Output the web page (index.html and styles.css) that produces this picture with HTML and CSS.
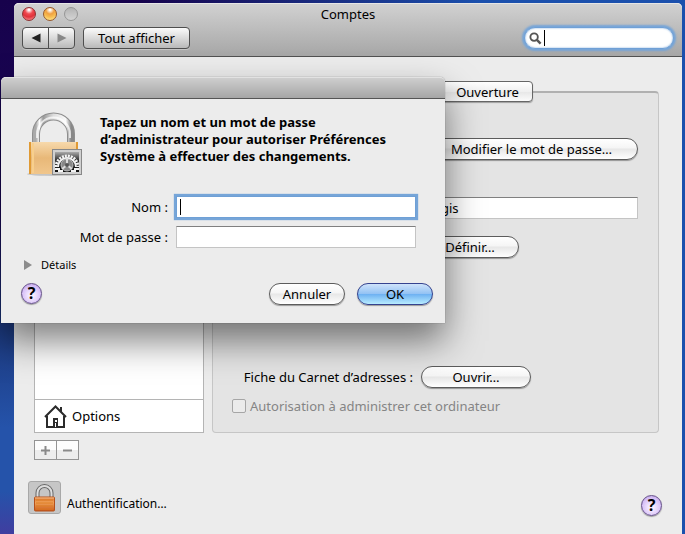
FILE: index.html
```
<!DOCTYPE html>
<html lang="fr">

<head>
    <meta charset="utf-8">
    <title>Comptes</title>
    <link rel="stylesheet" href="styles.css">
</head>

<body>
    <main class="window">
        <header class="titlebar">
            <div class="title-row">
                <div class="lights">
                    <button class="light red" aria-label="Fermer"></button>
                    <button class="light yellow" aria-label="Réduire"></button>
                    <button class="light gray" aria-label="Agrandir" disabled></button>
                </div>
                <h1>Comptes</h1>
            </div>
            <div class="toolbar">
                <div class="nav">
                    <button class="tool-button" aria-label="Précédent">
                        <svg width="10" height="10" viewBox="0 0 10 10"><path d="M9.500 0.500v9L0.500 5z" fill="#222" /></svg>
                    </button>
                    <button class="tool-button" aria-label="Suivant">
                        <svg width="10" height="10" viewBox="0 0 10 10"><path d="M0.500 0.500v9L9.500 5z" fill="#888" /></svg>
                    </button>
                </div>
                <button class="tool-button show-all">Tout afficher</button>
                <label class="search">
                    <svg width="13" height="13" viewBox="0 0 14 14" fill="none" stroke="#555">
                        <circle cx="5.500" cy="5.500" r="4" stroke-width="2" />
                        <path d="M8.500 8.500l4 4" stroke-width="2.600" />
                    </svg>
                    <input type="text" class="search-input" aria-label="Rechercher">
                </label>
            </div>
        </header>

        <div class="content">
            <aside class="sidebar">
                <div class="accounts">
                    <div class="account-list"></div>
                    <div class="options">
                        <svg width="23" height="23" viewBox="0 0 23 23" fill="none" stroke="#2b2b2b" stroke-width="2">
                            <path d="M1 12L11.500 1.500L22 12" />
                            <path d="M3 11v11h17V11M17 7V2" />
                            <path d="M9 13h5v9H9z" fill="#2b2b2b" stroke="none" />
                            <path d="M11 15h2v2h-2zM11 18h1v4h-1z" fill="#fff" stroke="none" />
                        </svg>
                        Options
                    </div>
                </div>
                <div class="list-buttons">
                    <button aria-label="Ajouter" disabled>
                        <svg width="9" height="9" viewBox="0 0 9 9" stroke="#8a8a8a" stroke-width="2"><path d="M4.500 0v9M0 4.500h9" /></svg>
                    </button>
                    <button aria-label="Supprimer" disabled>
                        <svg width="9" height="9" viewBox="0 0 9 9" stroke="#8a8a8a" stroke-width="2"><path d="M0 4.500h9" /></svg>
                    </button>
                </div>
            </aside>

            <section class="pane-area">
                <div class="tabs">
                    <button class="tab">Ouverture</button>
                </div>
                <div class="pane">
                    <button class="pill change-password">Modifier le mot de passe…</button>
                    <input type="text" class="field full-name" value="gis" aria-label="Nom complet">
                    <button class="pill define">Définir…</button>
                    <label class="card-label" for="openCard">Fiche du Carnet d’adresses :</label>
                    <button class="pill open-card" id="openCard">Ouvrir…</button>
                    <label class="admin"><input type="checkbox" disabled>Autorisation à administrer cet ordinateur</label>
                </div>
            </section>
        </div>

        <footer class="footer">
            <button class="lock-button" aria-label="Authentification">
                <svg width="23" height="28" viewBox="0 0 23 28">
                    <defs>
                        <linearGradient id="orange" x1="0" y1="0" x2="0" y2="1">
                            <stop offset="0" stop-color="#d8702c" />
                            <stop offset=".4" stop-color="#f0a258" />
                            <stop offset="1" stop-color="#c9591c" />
                        </linearGradient>
                    </defs>
                    <path d="M4.500 14V9a7 7 0 0 1 14 0v5" fill="none" stroke="#666" stroke-width="4" />
                    <path d="M4.500 14V9a7 7 0 0 1 14 0v5" fill="none" stroke="#ddd" stroke-width="2" />
                    <rect x="1.500" y="13" width="20" height="14" rx="1" fill="url(#orange)" stroke="#b5501a" />
                    <path d="M3 16h17M3 19h17M3 22h17M3 25h17" stroke="#dc7a22" />
                    <path d="M2 14h19" stroke="#f8c08a" />
                </svg>
            </button>
            <span class="auth-text">Authentification…</span>
            <button class="help">?</button>
        </footer>
    </main>

    <form class="dialog" role="dialog" aria-label="Authentification">
        <div class="dialog-bar"></div>
        <div class="dialog-body">
            <div class="message">
                <svg width="58" height="66" viewBox="0 0 58 66">
                    <defs>
                        <linearGradient id="brass" x1="0" y1="0" x2="0" y2="1">
                            <stop offset="0" stop-color="#f7d9ac" />
                            <stop offset=".5" stop-color="#e8b878" />
                            <stop offset="1" stop-color="#f0c68c" />
                        </linearGradient>
                        <linearGradient id="steel" x1="0" y1="0" x2="1" y2="0">
                            <stop offset="0" stop-color="#aaa" />
                            <stop offset=".1" stop-color="#fff" />
                            <stop offset=".2" stop-color="#999" />
                            <stop offset=".5" stop-color="#ddd" />
                            <stop offset=".85" stop-color="#fafafa" />
                            <stop offset="1" stop-color="#888" />
                        </linearGradient>
                        <linearGradient id="plate" x1="0" y1="0" x2="0" y2="1">
                            <stop offset="0" stop-color="#aaa" />
                            <stop offset=".4" stop-color="#333" />
                            <stop offset="1" stop-color="#111" />
                        </linearGradient>
                    </defs>
                    <ellipse cx="28" cy="63" rx="27" ry="2" fill="#aaa" opacity=".6" />
                    <path d="M10 31V23a17 17 0 0 1 35 0v8" fill="none" stroke="#8e8e8e" stroke-width="8" />
                    <path d="M10 31V23a17 17 0 0 1 35 0v8" fill="none" stroke="url(#steel)" stroke-width="6" />
                    <path d="M11 27v-4a16 16 0 0 1 33 0v4" fill="none" stroke="#fff" stroke-width="2" opacity=".7" />
                    <rect x="3" y="31" width="49" height="32" fill="url(#brass)" />
                    <path d="M4 31v32M51 31v32" stroke="#e09a34" stroke-width="2" />
                    <path d="M7 32v30" stroke="#f8cf8c" stroke-width="2" />
                    <rect x="26.500" y="38.500" width="29" height="25" fill="#d0d0d0" stroke="#888" />
                    <rect x="29" y="41" width="24" height="20" fill="url(#plate)" />
                    <path d="M30 56a11 11 0 1 1 22 0" fill="none" stroke="#f4f4f4" stroke-width="3" stroke-dasharray="2 1" />
                    <path d="M32 56a9 9 0 1 1 18 0" fill="none" stroke="#f4f4f4" stroke-width="2" />
                    <path d="M29 58h4v2h4M53 58h-4v2h-4" fill="none" stroke="#f4f4f4" stroke-width="2" />
                    <circle cx="41" cy="54" r="6" fill="#888" stroke="#bbb" stroke-width="1" />
                    <path d="M41 54v-6M41 54l5 4M41 54l-5 4" stroke="#ddd" stroke-width="2" />
                    <circle cx="41" cy="54" r="2" fill="#555" />
                </svg>
                <p>Tapez un nom et un mot de passe<br>d’administrateur pour autoriser Préférences<br>Système à effectuer des changements.</p>
            </div>
            <div class="credentials">
                <label for="nameInput">Nom :</label>
                <input type="text" id="nameInput" class="field focused">
                <label for="passwordInput">Mot de passe :</label>
                <input type="password" id="passwordInput" class="field">
            </div>
            <button type="button" class="details">
                <svg width="8" height="10" viewBox="0 0 8 10"><path d="M0 0v10l8-5z" fill="#8c8c8c" /></svg>
                Détails
            </button>
            <div class="dialog-buttons">
                <button type="button" class="help">?</button>
                <button type="button" class="pill cancel">Annuler</button>
                <button type="button" class="pill ok">OK</button>
            </div>
        </div>
    </form>
</body>

</html>
```

FILE: styles.css
```
* {
    box-sizing: border-box;
}

body {
    font-family: "Noto Sans", "Open Sans", sans-serif;
    font-size: 13px;
    line-height: 16px;
    color: #000;
    margin: 0;
    padding: 3px 3px 0 14px;
    min-height: 100vh;
    display: flex;
    overflow: hidden;
    background: linear-gradient(to right, transparent 20%, #1b50ad 70%),
        linear-gradient(to bottom, #17024c 0%, #1b0858 40%, #1c3a80 62%, #2553aa 80%, #2553aa 92%, #403ea0 100%);
}

button,
input {
    font: inherit;
    color: inherit;
    margin: 0;
    padding: 0;
}

input {
    outline: none;
}

svg {
    display: block;
    flex: none;
}

.window {
    flex: 1;
    background-color: #ececec;
    border-radius: 5px 5px 0 0;
}

.titlebar {
    height: 54px;
    padding: 2px 8px 0;
    border-bottom: 1px solid #515151;
    border-radius: 5px 5px 0 0;
    background: linear-gradient(#d2d2d2, #a6a6a6);
    box-shadow: inset 0 1px 0 #e6e6e6;
}

.title-row {
    display: grid;
    grid-template-columns: 1fr auto 1fr;
    align-items: center;
    height: 18px;
}

.title-row h1 {
    margin: 0;
    font-size: 13px;
    font-weight: normal;
}

.lights {
    display: flex;
    gap: 7px;
}

.light {
    width: 14px;
    height: 14px;
    border-radius: 50%;
    border: 1px solid #8a8a8a;
}

.red {
    border-color: #8e3030;
    background: radial-gradient(circle at 50% 15%, #fff 5%, #f04a50 35%, #e0333b 60%, #ffa8a8 100%);
}

.yellow {
    border-color: #96582a;
    background: radial-gradient(circle at 50% 15%, #fff 5%, #f0a040 35%, #f8bc50 60%, #fff4a0 100%);
}

.gray {
    border-color: #969696;
    background: linear-gradient(#b4b4b4, #d4d4d4);
}

.toolbar {
    display: flex;
    gap: 8px;
    margin-top: 4px;
    align-items: center;
}

.nav {
    display: flex;
}

.tool-button {
    height: 22px;
    border: 1px solid #4e4e4e;
    border-radius: 4px;
    background: linear-gradient(#fbfbfb, #b9b9b9);
    box-shadow: 0 1px 0 #c4c4c4;
}

.nav .tool-button {
    width: 27px;
    padding-left: 8px;
    border-radius: 4px 0 0 4px;
}

.nav .tool-button + .tool-button {
    margin-left: -1px;
    border-radius: 0 4px 4px 0;
}

.show-all {
    width: 107px;
}

.search {
    display: flex;
    align-items: center;
    gap: 2px;
    width: 150px;
    height: 22px;
    margin-left: auto;
    padding: 0 10px 0 4px;
    border: 1px solid #6fa0d6;
    border-radius: 11px;
    background-color: #fff;
    box-shadow: 0 0 2px 2px #76a5d8, inset 0 0 2px #76a5d8;
}

.search-input {
    flex: 1;
    min-width: 0;
    height: 16px;
    border: none;
    background: linear-gradient(#000, #000) no-repeat left / 1px 16px;
}

.content {
    display: flex;
    gap: 8px;
    padding: 24px 23px 0 20px;
}

.sidebar {
    width: 170px;
    display: flex;
    flex-direction: column;
}

.accounts {
    flex: 1;
    display: flex;
    flex-direction: column;
    border: 1px solid #b4b4b4;
    background-color: #fff;
}

.account-list {
    flex: 1;
}

.options {
    display: flex;
    align-items: center;
    gap: 5px;
    height: 33px;
    padding-left: 9px;
    border-top: 1px solid #b4b4b4;
}

.list-buttons {
    display: flex;
    margin-top: 7px;
}

.list-buttons button {
    display: flex;
    align-items: center;
    justify-content: center;
    width: 23px;
    height: 20px;
    border: 1px solid #949494;
    background: linear-gradient(#fdfdfd 50%, #ededed 50%);
}

.list-buttons button + button {
    margin-left: -1px;
}

.pane-area {
    flex: 1;
    margin-bottom: 27px;
}

.tabs {
    display: flex;
    position: relative;
    margin-left: 230px;
}

.tab {
    width: 91px;
    height: 21px;
    border: 1px solid #666;
    border-radius: 0 4px 4px 0;
    background: linear-gradient(#fff, #f0f0f0 50%, #e6e6e6 50%, #fbfbfb);
    box-shadow: 0 1px 1px rgba(0, 0, 0, .3);
}

.pane {
    display: grid;
    grid-template-columns: 200px 1fr;
    column-gap: 8px;
    margin-top: -11px;
    padding: 45px 20px 18px 0;
    border: 1px solid #c6c6c6;
    border-top: 2px solid #b0b0b0;
    border-radius: 4px;
    background-color: #e4e4e4;
}

.pill {
    height: 22px;
    border: 1px solid #5c5c5c;
    border-radius: 11px;
    background: linear-gradient(#fff, #f5f5f5 45%, #e7e7e7 50%, #fff);
    box-shadow: 0 1px 1px rgba(0, 0, 0, .35);
}

.field {
    height: 22px;
    padding: 0 3px;
    border: 1px solid #c4c4c4;
    border-top-color: #808080;
    background-color: #fff;
}

.change-password {
    grid-column: 2;
    margin-left: 4px;
}

.full-name {
    grid-column: 2;
    min-width: 0;
    margin-top: 37px;
    padding-left: 19px;
}

.define {
    grid-column: 2;
    width: 98px;
    margin-top: 17px;
}

.card-label {
    margin-top: 108px;
    line-height: 22px;
    text-align: right;
    white-space: nowrap;
}

.open-card {
    width: 110px;
    margin-top: 108px;
}

.admin {
    grid-column: 1 / 3;
    display: flex;
    align-items: center;
    gap: 4px;
    margin-top: 10px;
    padding-left: 19px;
    color: #858585;
}

.admin input {
    appearance: none;
    width: 14px;
    height: 14px;
    border: 1px solid #a6a6a6;
    border-radius: 2px;
    background-color: #ebebeb;
}

.footer {
    display: flex;
    align-items: flex-end;
    gap: 6px;
    padding: 21px 20px 18px 14px;
}

.lock-button {
    width: 33px;
    height: 33px;
    padding: 0 4px;
    border: 1px solid #a8a8a8;
    border-radius: 3px;
    background-color: #c6c6c6;
}

.auth-text {
    font-size: 12px;
    padding-bottom: 2px;
}

.help {
    width: 21px;
    height: 21px;
    border: 1px solid #65508a;
    border-radius: 50%;
    background: radial-gradient(circle at 50% 60%, #f6edff 15%, #d9c2f8 60%, #b294dc);
    box-shadow: 0 1px 1px rgba(0, 0, 0, .35);
    font-size: 16px;
    font-weight: bold;
    line-height: 19px;
}

.footer .help {
    margin: 0 0 -2px auto;
}

/* authentication sheet, floats over the window */
.dialog {
    position: absolute;
    top: 77px;
    left: 1px;
    width: 444px;
    border-radius: 5px 5px 0 0;
    background-color: #ececec;
    box-shadow: 0 0 1px rgba(0, 0, 0, .6), 0 18px 36px rgba(0, 0, 0, .5);
}

.dialog-bar {
    height: 22px;
    border-top: 1px solid #e2e2e2;
    border-bottom: 1px solid #555;
    border-radius: 5px 5px 0 0;
    background: linear-gradient(#cecece, #a6a6a6);
}

.dialog-body {
    padding: 12px 12px 18px 20px;
}

.message {
    display: flex;
    gap: 16px;
    padding-left: 5px;
}

.message p {
    margin: 3px 0 0;
    font-weight: bold;
    line-height: 17px;
    white-space: nowrap;
}

.credentials {
    display: grid;
    grid-template-columns: 147px 240px;
    gap: 8px;
    margin-top: 19px;
    line-height: 22px;
    text-align: right;
}

.focused {
    border-color: #6fa0d6;
    background: #fff linear-gradient(#000, #000) no-repeat 3px center / 1px 16px;
    box-shadow: 0 0 1px 2px #76a5d8;
}

.details {
    display: flex;
    align-items: center;
    gap: 9px;
    margin-top: 9px;
    padding-left: 3px;
    border: none;
    background: none;
    font-size: 11px;
}

.dialog-buttons {
    display: flex;
    gap: 12px;
    margin-top: 10px;
}

.dialog-buttons .pill {
    width: 76px;
}

.cancel {
    margin-left: auto;
}

.ok {
    border-color: #35438f;
    background: linear-gradient(#cfe3fa, #94c3f4 48%, #6fb2f2 52%, #b8ecff);
}
```
